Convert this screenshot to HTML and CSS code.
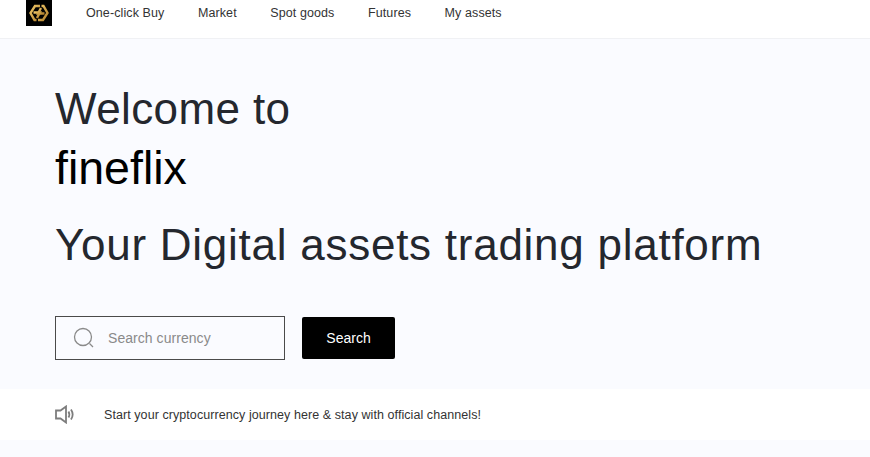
FILE: index.html
```html
<!DOCTYPE html>
<html lang="en">
<head>
  <meta charset="UTF-8" />
  <meta name="viewport" content="width=device-width, initial-scale=1.0" />
  <title>fineflix</title>
  <link rel="stylesheet" href="styles.css">
</head>
<body>
  <header class="topbar">
    <a class="logo" href="#">
      <svg width="20" height="18" viewBox="0 0 20 18" fill="none" stroke="url(#gold)" stroke-width="2.400">
        <defs>
          <linearGradient id="gold" x1="0" y1="0" x2="1" y2="1">
            <stop offset="0" stop-color="#f0c869" />
            <stop offset="1" stop-color="#b07f2c" />
          </linearGradient>
        </defs>
        <path d="M11 2H6L1.500 9L5.500 16H7.500" />
        <path d="M9 16H14L18.500 9L14.500 2H12.500" />
        <path d="M4.500 8.500H11L8 14" />
        <path d="M15.500 9.500H9L12 4" />
      </svg>
    </a>
    <nav class="nav">
      <a href="#">One-click Buy</a>
      <a href="#">Market</a>
      <a href="#">Spot goods</a>
      <a href="#">Futures</a>
      <a href="#">My assets</a>
    </nav>
  </header>

  <main class="hero">
    <h1 class="welcome">Welcome to</h1>
    <div class="brand">fineflix</div>
    <h2 class="tagline">Your Digital assets trading platform</h2>
    <form class="search">
      <label class="search-box">
        <svg width="22" height="22" viewBox="0 0 22 22" fill="none" stroke="#8a8a8a" stroke-width="1.300">
          <circle cx="10" cy="10" r="8.500" />
          <path d="M16.500 16.500L20 20" />
        </svg>
        <input type="text" placeholder="Search currency" />
      </label>
      <button class="search-btn" type="button">Search</button>
    </form>
  </main>

  <section class="notice">
    <svg width="20" height="19" viewBox="0 0 20 19" fill="none" stroke="#7d7d7d" stroke-width="1.800">
      <path d="M1 5.500H5.500L11 1.500V17.500L5.500 13.500H1Z" />
      <path d="M13.500 6.500C14.500 8.300 14.500 10.700 13.500 12.500" />
      <path d="M16 4.500C18 7.500 18 11.500 16 14.500" />
    </svg>
    <p>Start your cryptocurrency journey here &amp; stay with official channels!</p>
  </section>
</body>
</html>
```

FILE: styles.css
```css
body {
  margin: 0;
  background: #fafbff;
  color: #24272e;
  font-family: "Liberation Sans", sans-serif;
  height: 457px;
  overflow: hidden;
}
a {
  color: inherit;
  text-decoration: none;
}
.topbar {
  display: flex;
  align-items: flex-start;
  height: 38px;
  padding-left: 26px;
  background: #fff;
  border-bottom: 1px solid #f0f1f4;
}
.logo {
  display: flex;
  align-items: center;
  justify-content: center;
  width: 26px;
  height: 26px;
  background: #000;
}
.nav {
  display: flex;
  gap: 33.500px;
  margin-left: 34px;
  font-size: 12.500px;
  line-height: 27px;
  letter-spacing: 0.100px;
  color: #333;
}
.hero {
  height: 350px;
  padding-left: 55px;
  box-sizing: border-box;
  overflow: hidden;
}
.welcome {
  margin: 40px 0 0;
  font-size: 44px;
  line-height: 60px;
  font-weight: 400;
  letter-spacing: 0.400px;
}
.brand {
  margin-top: -1px;
  font-size: 46.500px;
  line-height: 60px;
  color: #000;
}
.tagline {
  margin: 17px 0 0;
  font-size: 44px;
  line-height: 60px;
  font-weight: 400;
  letter-spacing: 0.740px;
}
.search {
  display: flex;
  align-items: center;
  gap: 17px;
  margin-top: 41px;
}
.search-box {
  display: flex;
  align-items: center;
  gap: 13px;
  box-sizing: border-box;
  width: 230px;
  height: 44px;
  padding-left: 17px;
  border: 1px solid #4a4a4a;
}
.search-box input {
  width: 150px;
  padding: 0;
  border: none;
  outline: none;
  background: transparent;
  font-family: inherit;
  font-size: 14px;
  letter-spacing: 0.050px;
  color: #333;
}
.search-box input::placeholder {
  color: #8a8a8a;
  opacity: 1;
}
.search-btn {
  width: 93px;
  height: 42px;
  border: none;
  border-radius: 2px;
  background: #000;
  color: #fff;
  font-family: inherit;
  font-size: 14px;
}
.notice {
  display: flex;
  align-items: center;
  gap: 29px;
  height: 51px;
  padding-left: 55px;
  background: #fff;
}
.notice p {
  margin: 0;
  font-size: 12.500px;
  letter-spacing: 0.070px;
  color: #333;
}
```
